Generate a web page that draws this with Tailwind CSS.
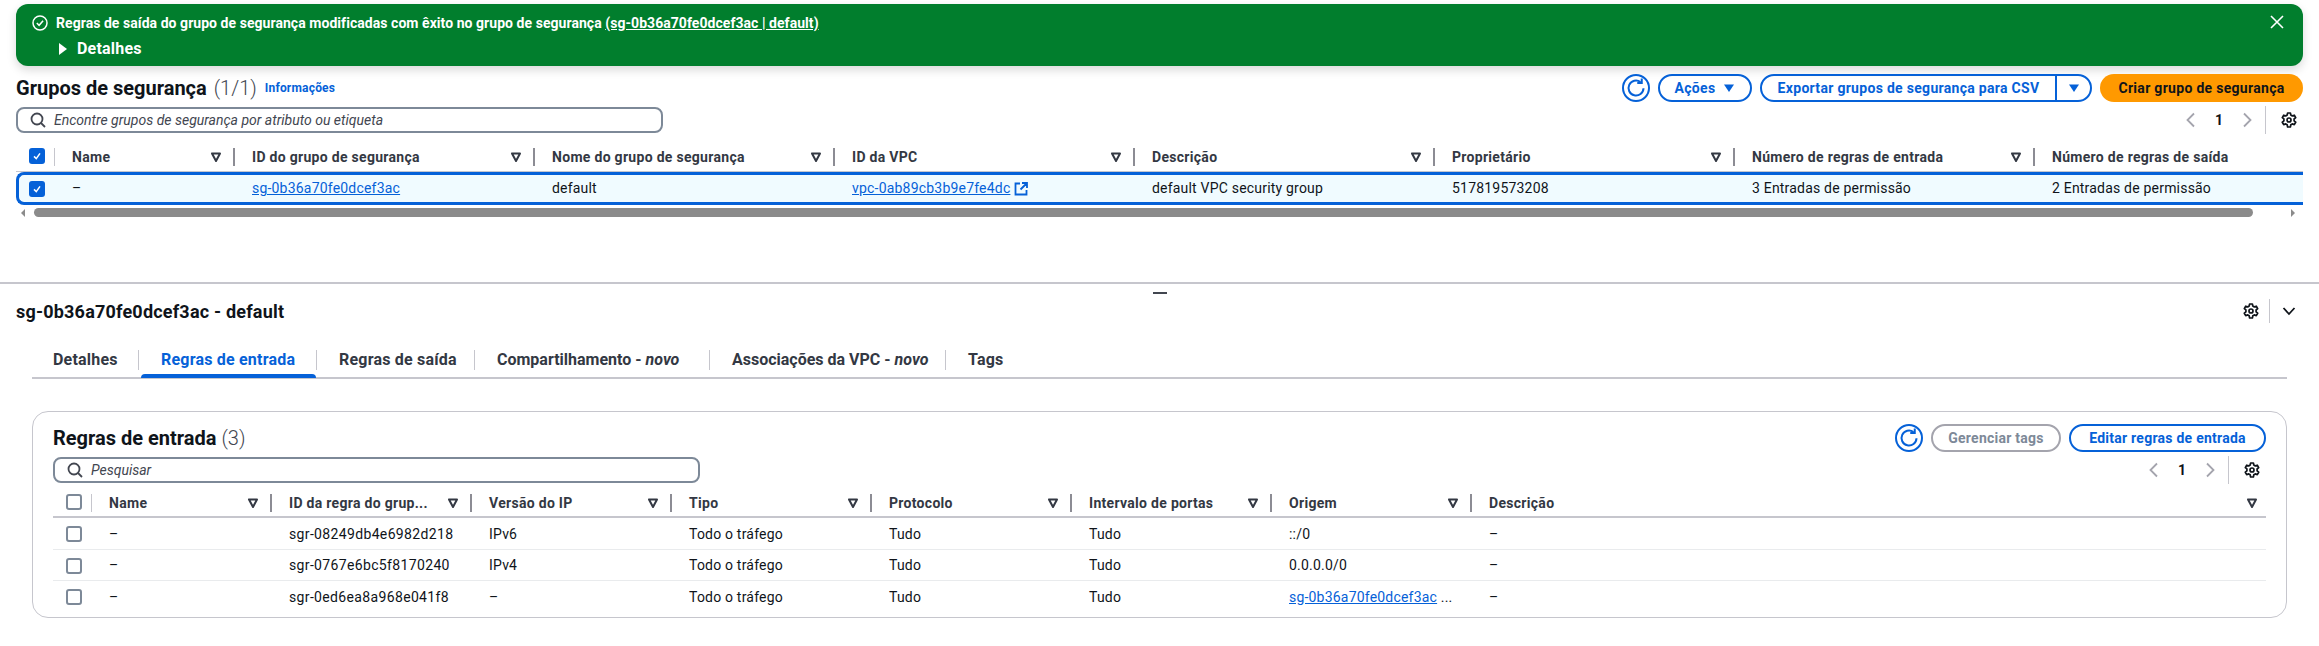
<!DOCTYPE html>
<html lang="pt">
  <head>
    <meta charset="UTF-8" />
    <title>Grupos de segurança</title>
    <script src="https://cdn.jsdelivr.net/npm/@tailwindcss/browser@4"></script>
  </head>
  <body class="bg-white h-[646px] overflow-hidden font-['Roboto',sans-serif] text-[14px] tracking-[0.2px] text-[#0f141a]">
    <svg class="hidden">
      <symbol id="sort" viewBox="0 0 12 12"><path d="M2 2.5h8L6 10z" fill="none" stroke="currentColor" stroke-width="2" stroke-linejoin="round"/></symbol>
      <symbol id="gear" viewBox="0 0 16 16"><path d="M6.6 1h2.8l.4 2 1.5.9 2-.7 1.4 2.4-1.6 1.4v1.9l1.6 1.3-1.4 2.4-2-.7-1.5.9-.4 2.2H6.6l-.4-2.2-1.5-.9-2 .7-1.4-2.4 1.6-1.3V6.9L1.3 5.6l1.4-2.4 2 .7 1.5-.9z" fill="none" stroke="currentColor" stroke-width="1.7" stroke-linejoin="round"/><circle cx="8" cy="8" r="2" fill="none" stroke="currentColor" stroke-width="1.7"/></symbol>
      <symbol id="refresh" viewBox="0 0 16 16"><path d="M14 8.2A6 6 0 1 1 11.6 3.2" fill="none" stroke="currentColor" stroke-width="1.6"/><path d="M9 3.9h3.6V.3" fill="none" stroke="currentColor" stroke-width="1.6"/></symbol>
      <symbol id="search" viewBox="0 0 16 16"><circle cx="7" cy="7" r="5.5" fill="none" stroke="currentColor" stroke-width="1.8"/><path d="M11 11l4 4" stroke="currentColor" stroke-width="1.8" fill="none"/></symbol>
      <symbol id="prev" viewBox="0 0 16 16"><path d="M11 1.5L4.5 8l6.5 6.5" fill="none" stroke="currentColor" stroke-width="1.8"/></symbol>
      <symbol id="next" viewBox="0 0 16 16"><path d="M5 1.5L11.5 8 5 14.5" fill="none" stroke="currentColor" stroke-width="1.8"/></symbol>
      <symbol id="caret" viewBox="0 0 12 12"><path d="M1 2.5h10L6 10z" fill="currentColor"/></symbol>
      <symbol id="check" viewBox="0 0 16 16"><path d="M4 8.5l3 3 5-7" fill="none" stroke="currentColor" stroke-width="2"/></symbol>
    </svg>

    <!-- Banner -->
    <div class="mx-4 mt-1 h-[62px] rounded-xl bg-[#017e2d] text-white shadow-[0_4px_10px_rgba(0,0,0,0.15)] flex justify-between pl-4 pr-[19px] font-bold tracking-[0.05px]">
      <div>
        <div class="flex items-center h-[38px] gap-2">
          <svg class="w-4 h-4" viewBox="0 0 16 16"><circle cx="8" cy="8" r="7" fill="none" stroke="currentColor" stroke-width="1.5"/><path d="M4.8 8l2.3 2.3 4-4.6" fill="none" stroke="currentColor" stroke-width="1.5"/></svg>
          <span>Regras de saída do grupo de segurança modificadas com êxito no grupo de segurança <a class="underline">(sg-0b36a70fe0dcef3ac | default)</a></span>
        </div>
        <div class="flex items-center gap-[10px] pl-[27px] text-[16px] tracking-[0.2px] leading-[14px]">
          <span class="w-0 h-0 border-y-[6px] border-y-transparent border-l-[8px] border-l-white"></span>
          <span>Detalhes</span>
        </div>
      </div>
      <svg class="w-[14px] h-[14px] mt-[11px]" viewBox="0 0 14 14"><path d="M1 1l12 12M13 1L1 13" stroke="currentColor" stroke-width="1.6" fill="none"/></svg>
    </div>

    <!-- Grupos de seguranca -->
    <div class="px-4 mt-2 flex justify-between h-[28px]">
      <div class="flex items-center tracking-normal">
        <h1 class="text-[20px] font-bold">Grupos de segurança</h1>
        <span class="text-[20px] text-[#424650] font-light ml-[7px]">(1/1)</span>
        <a class="text-[12px] font-bold tracking-[0.2px] text-[#0561d8] ml-2">Informações</a>
      </div>
      <div class="flex items-center gap-2 font-bold tracking-[0.3px] text-[#0561d8]">
        <button class="w-7 h-7 rounded-full border-2 border-[#0561d8] flex items-center justify-center"><svg class="w-5 h-5"><use href="#refresh"/></svg></button>
        <button class="w-[94px] h-7 rounded-full border-2 border-[#0561d8] flex items-center justify-center gap-2">Ações <svg class="w-3 h-3"><use href="#caret"/></svg></button>
        <div class="w-[332px] h-7 rounded-full border-2 border-[#0561d8] flex items-center">
          <span class="w-[295px] text-center border-r-2 border-[#0561d8] leading-6">Exportar grupos de segurança para CSV</span>
          <span class="flex-1 flex justify-center"><svg class="w-3 h-3"><use href="#caret"/></svg></span>
        </div>
        <button class="w-[203px] h-7 rounded-full bg-[#ff9900] text-[#0f141a] flex items-center justify-center">Criar grupo de segurança</button>
      </div>
    </div>
    <div class="px-4 mt-1 flex justify-between h-7">
      <div class="w-[647px] h-[26px] mt-[1px] rounded-lg border-2 border-[#7d8998] flex items-center pl-3 gap-2 italic tracking-normal text-[#424650]">
        <svg class="w-4 h-4 text-[#424650]"><use href="#search"/></svg>
        <span>Encontre grupos de segurança por atributo ou etiqueta</span>
      </div>
      <div class="flex items-center pr-[6px]">
        <svg class="w-4 h-4 text-[#a4a4ad]"><use href="#prev"/></svg>
        <span class="w-10 text-center font-bold">1</span>
        <svg class="w-4 h-4 text-[#a4a4ad]"><use href="#next"/></svg>
        <span class="h-7 border-l border-[#c6c6cd] ml-[10px] mr-[15px]"></span>
        <svg class="w-4 h-4"><use href="#gear"/></svg>
      </div>
    </div>

    <!-- Tabela grupos -->
    <div class="mx-4 mt-[14px]">
      <div class="grid grid-cols-[39px_180px_300px_300px_300px_300px_300px_300px_1fr] h-[24px] font-bold tracking-[0.3px] text-[#333843] border-b border-[#c6c6cd]">
        <div class="flex pl-[13px] h-[18px] justify-between">
          <span class="w-4 h-4 rounded-[3px] bg-[#0561d8] text-white flex items-center justify-center"><svg class="w-3 h-3"><use href="#check"/></svg></span>
          <span class="border-r border-[#c6c6cd]"></span>
        </div>
        <div class="flex items-center h-[18px] justify-between pl-[17px] border-r-2 border-[#8c8c94]"><span>Name</span><svg class="w-3 h-3 mr-[11px]"><use href="#sort"/></svg></div>
        <div class="flex items-center h-[18px] justify-between pl-[17px] border-r-2 border-[#8c8c94]"><span>ID do grupo de segurança</span><svg class="w-3 h-3 mr-[11px]"><use href="#sort"/></svg></div>
        <div class="flex items-center h-[18px] justify-between pl-[17px] border-r-2 border-[#8c8c94]"><span>Nome do grupo de segurança</span><svg class="w-3 h-3 mr-[11px]"><use href="#sort"/></svg></div>
        <div class="flex items-center h-[18px] justify-between pl-[17px] border-r-2 border-[#8c8c94]"><span>ID da VPC</span><svg class="w-3 h-3 mr-[11px]"><use href="#sort"/></svg></div>
        <div class="flex items-center h-[18px] justify-between pl-[17px] border-r-2 border-[#8c8c94]"><span>Descrição</span><svg class="w-3 h-3 mr-[11px]"><use href="#sort"/></svg></div>
        <div class="flex items-center h-[18px] justify-between pl-[17px] border-r-2 border-[#8c8c94]"><span>Proprietário</span><svg class="w-3 h-3 mr-[11px]"><use href="#sort"/></svg></div>
        <div class="flex items-center h-[18px] justify-between pl-[17px] border-r-2 border-[#8c8c94]"><span>Número de regras de entrada</span><svg class="w-3 h-3 mr-[11px]"><use href="#sort"/></svg></div>
        <div class="flex items-center h-[18px] pl-[17px]"><span>Número de regras de saída</span></div>
      </div>
      <div class="grid grid-cols-[39px_180px_300px_300px_300px_300px_300px_300px_1fr] items-center h-[33px] border-y-[3px] border-l-[3px] border-[#0561d8] rounded-l-lg bg-[#f0fbff]">
        <div class="pl-[10px]"><span class="w-4 h-4 rounded-[3px] bg-[#0561d8] text-white flex items-center justify-center"><svg class="w-3 h-3"><use href="#check"/></svg></span></div>
        <div class="pl-[14px]">–</div>
        <div class="pl-[14px]"><a class="text-[#0561d8] underline">sg-0b36a70fe0dcef3ac</a></div>
        <div class="pl-[14px]">default</div>
        <div class="pl-[14px] flex items-center gap-1"><a class="text-[#0561d8] underline">vpc-0ab89cb3b9e7fe4dc</a>
          <svg class="w-[14px] h-[14px] text-[#0561d8]" viewBox="0 0 14 14"><path d="M6 1.5H1.5v11h11V8M8 1h5v5M13 1L6.5 7.5" fill="none" stroke="currentColor" stroke-width="1.8"/></svg>
        </div>
        <div class="pl-[14px]">default VPC security group</div>
        <div class="pl-[14px]">517819573208</div>
        <div class="pl-[14px]">3 Entradas de permissão</div>
        <div class="pl-[14px]">2 Entradas de permissão</div>
      </div>
      <div class="flex items-center h-[9px] mt-[3px] text-[#8b8b8b]">
        <span class="w-0 h-0 border-y-[4px] border-y-transparent border-r-[4px] border-r-[#8b8b8b] ml-[5px]"></span>
        <span class="ml-[9px] w-[2219px] h-[9px] rounded-full bg-[#8b8b8b]"></span>
        <span class="w-0 h-0 border-y-[4px] border-y-transparent border-l-[4px] border-l-[#8b8b8b] ml-[38px]"></span>
      </div>
    </div>

    <!-- Divisor -->
    <div class="mt-[65px] border-t-2 border-[#c6c6cd] flex justify-center">
      <span class="w-[14px] h-[2px] bg-[#424650] mt-[8px]"></span>
    </div>

    <!-- Detalhes -->
    <div class="pl-4 pr-[23px] mt-[5px] flex justify-between items-center h-[24px]">
      <h2 class="text-[18px] font-bold">sg-0b36a70fe0dcef3ac - default</h2>
      <div class="flex items-center">
        <svg class="w-4 h-4"><use href="#gear"/></svg>
        <span class="h-6 border-l border-[#c6c6cd] ml-[10px] mr-[12px]"></span>
        <svg class="w-[14px] h-[14px]" viewBox="0 0 14 14"><path d="M1.5 4l5.5 6 5.5-6" fill="none" stroke="currentColor" stroke-width="1.8"/></svg>
      </div>
    </div>

    <!-- Abas -->
    <div class="ml-8 w-[2255px] mt-[25px] h-[31px] border-b-2 border-[#c6c6cd] flex font-bold text-[#333843] text-[16px]">
      <div class="w-[107px] pl-[21px] h-[20px] mt-[2px] border-r border-[#c6c6cd] leading-[20px]">Detalhes</div>
      <div class="relative w-[178px] pl-[22px] h-[20px] mt-[2px] border-r border-[#c6c6cd] leading-[20px] text-[#0561d8]">Regras de entrada
        <span class="absolute left-[2px] right-0 top-[24px] h-1 rounded-t bg-[#0561d8]"></span>
      </div>
      <div class="w-[158px] pl-[22px] h-[20px] mt-[2px] border-r border-[#c6c6cd] leading-[20px]">Regras de saída</div>
      <div class="w-[235px] pl-[22px] h-[20px] mt-[2px] border-r border-[#c6c6cd] leading-[20px] tracking-normal">Compartilhamento - <i>novo</i></div>
      <div class="w-[236px] pl-[22px] h-[20px] mt-[2px] border-r border-[#c6c6cd] leading-[20px] tracking-normal">Associações da VPC - <i>novo</i></div>
      <div class="pl-[22px] h-[20px] mt-[2px] leading-[20px]">Tags</div>
    </div>

    <!-- Card regras -->
    <div class="ml-8 w-[2255px] mt-[32px] h-[207px] rounded-2xl border border-[#c6c6cd] pl-5 pr-5 pt-3">
      <div class="flex justify-between h-7">
        <div class="flex items-center tracking-normal">
          <h3 class="text-[20px] font-bold">Regras de entrada</h3>
          <span class="text-[20px] font-light text-[#424650] ml-[5px]">(3)</span>
        </div>
        <div class="flex gap-2 font-bold tracking-[0.25px] text-[#0561d8]">
          <button class="w-7 h-7 rounded-full border-2 border-[#0561d8] flex items-center justify-center"><svg class="w-5 h-5"><use href="#refresh"/></svg></button>
          <button class="w-[130px] h-7 rounded-full border-2 border-[#a4a4ad] text-[#7d8998]">Gerenciar tags</button>
          <button class="w-[197px] h-7 rounded-full border-2 border-[#0561d8]">Editar regras de entrada</button>
        </div>
      </div>
      <div class="flex justify-between h-7 mt-[4px]">
        <div class="w-[647px] h-[26px] mt-[1px] rounded-lg border-2 border-[#7d8998] flex items-center pl-3 gap-2 italic tracking-normal text-[#424650]">
          <svg class="w-4 h-4"><use href="#search"/></svg>
          <span>Pesquisar</span>
        </div>
        <div class="flex items-center pr-[6px]">
          <svg class="w-4 h-4 text-[#a4a4ad]"><use href="#prev"/></svg>
          <span class="w-10 text-center font-bold">1</span>
          <svg class="w-4 h-4 text-[#a4a4ad]"><use href="#next"/></svg>
          <span class="h-7 border-l border-[#c6c6cd] ml-[10px] mr-[15px]"></span>
          <svg class="w-4 h-4"><use href="#gear"/></svg>
        </div>
      </div>
      <div class="grid grid-cols-[39px_180px_200px_200px_200px_200px_200px_200px_1fr] mt-[10px] h-[24px] font-bold tracking-[0.3px] text-[#333843] border-b-2 border-[#c6c6cd]">
        <div class="flex pl-[13px] h-[18px] justify-between">
          <span class="w-4 h-4 rounded-[3px] border-2 border-[#7d8998]"></span>
          <span class="border-r border-[#c6c6cd]"></span>
        </div>
        <div class="flex items-center h-[18px] justify-between pl-[17px] border-r-2 border-[#8c8c94]"><span>Name</span><svg class="w-3 h-3 mr-[11px]"><use href="#sort"/></svg></div>
        <div class="flex items-center h-[18px] justify-between pl-[17px] border-r-2 border-[#8c8c94]"><span>ID da regra do grup...</span><svg class="w-3 h-3 mr-[11px]"><use href="#sort"/></svg></div>
        <div class="flex items-center h-[18px] justify-between pl-[17px] border-r-2 border-[#8c8c94]"><span>Versão do IP</span><svg class="w-3 h-3 mr-[11px]"><use href="#sort"/></svg></div>
        <div class="flex items-center h-[18px] justify-between pl-[17px] border-r-2 border-[#8c8c94]"><span>Tipo</span><svg class="w-3 h-3 mr-[11px]"><use href="#sort"/></svg></div>
        <div class="flex items-center h-[18px] justify-between pl-[17px] border-r-2 border-[#8c8c94]"><span>Protocolo</span><svg class="w-3 h-3 mr-[11px]"><use href="#sort"/></svg></div>
        <div class="flex items-center h-[18px] justify-between pl-[17px] border-r-2 border-[#8c8c94]"><span>Intervalo de portas</span><svg class="w-3 h-3 mr-[11px]"><use href="#sort"/></svg></div>
        <div class="flex items-center h-[18px] justify-between pl-[17px] border-r-2 border-[#8c8c94]"><span>Origem</span><svg class="w-3 h-3 mr-[11px]"><use href="#sort"/></svg></div>
        <div class="flex items-center h-[18px] justify-between pl-[17px]"><span>Descrição</span><svg class="w-3 h-3 mr-[8px]"><use href="#sort"/></svg></div>
      </div>
      <div class="grid grid-cols-[39px_180px_200px_200px_200px_200px_200px_200px_1fr] items-center h-[32px] pt-[1px] border-b border-[#e9ebed]">
        <div class="pl-[13px]"><span class="block w-4 h-4 rounded-[3px] border-2 border-[#7d8998]"></span></div>
        <div class="pl-[17px]">–</div><div class="pl-[17px] tracking-[0.35px]">sgr-08249db4e6982d218</div><div class="pl-[17px]">IPv6</div><div class="pl-[17px]">Todo o tráfego</div><div class="pl-[17px]">Tudo</div><div class="pl-[17px]">Tudo</div><div class="pl-[17px]">::/0</div><div class="pl-[17px]">–</div>
      </div>
      <div class="grid grid-cols-[39px_180px_200px_200px_200px_200px_200px_200px_1fr] items-center h-[31px] pt-[1px] border-b border-[#e9ebed]">
        <div class="pl-[13px]"><span class="block w-4 h-4 rounded-[3px] border-2 border-[#7d8998]"></span></div>
        <div class="pl-[17px]">–</div><div class="pl-[17px] tracking-[0.35px]">sgr-0767e6bc5f8170240</div><div class="pl-[17px]">IPv4</div><div class="pl-[17px]">Todo o tráfego</div><div class="pl-[17px]">Tudo</div><div class="pl-[17px]">Tudo</div><div class="pl-[17px]">0.0.0.0/0</div><div class="pl-[17px]">–</div>
      </div>
      <div class="grid grid-cols-[39px_180px_200px_200px_200px_200px_200px_200px_1fr] items-center h-[31px] pt-[1px]">
        <div class="pl-[13px]"><span class="block w-4 h-4 rounded-[3px] border-2 border-[#7d8998]"></span></div>
        <div class="pl-[17px]">–</div><div class="pl-[17px] tracking-[0.35px]">sgr-0ed6ea8a968e041f8</div><div class="pl-[17px]">–</div><div class="pl-[17px]">Todo o tráfego</div><div class="pl-[17px]">Tudo</div><div class="pl-[17px]">Tudo</div><div class="pl-[17px]"><a class="text-[#0561d8] underline">sg-0b36a70fe0dcef3ac</a> ...</div><div class="pl-[17px]">–</div>
      </div>
    </div>
  </body>
</html>
